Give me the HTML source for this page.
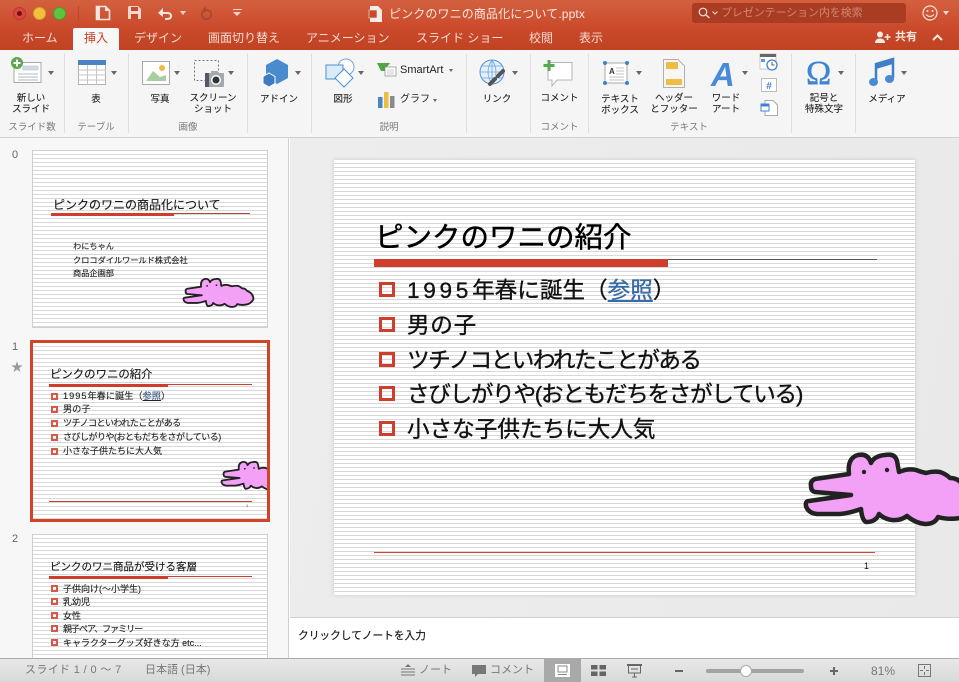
<!DOCTYPE html>
<html lang="ja"><head><meta charset="utf-8"><title>PowerPoint</title>
<style>
*{margin:0;padding:0;box-sizing:border-box}
html,body{width:959px;height:682px;overflow:hidden;background:#fff}
body{position:relative;font-family:"Liberation Sans","Noto Sans CJK JP",sans-serif;color:#222}
.t{position:absolute;white-space:nowrap;line-height:1}
.c{text-align:center;transform:translateX(-50%)}
.a{position:absolute}
.tab{color:#f6dcd3;font-size:12px;top:32px}
.lb{font-size:9.5px;color:#222;line-height:11px;position:absolute;text-align:center;white-space:nowrap;transform:translateX(-50%);-webkit-text-stroke:.1px #222}
.gl{font-size:9.5px;color:#7a7a7a;top:123px}
.dv{position:absolute;top:54px;width:1px;height:79px;background:#dfdfdf}
.ar{position:absolute;width:0;height:0;border-left:3px solid transparent;border-right:3px solid transparent;border-top:4px solid #666}
.sl{position:absolute;background:#fff repeating-linear-gradient(to bottom,#fff 0,#fff 3px,#d8d8d8 3px,#d8d8d8 4px);overflow:hidden}
.th{border:1px solid #cfcfcf}
.b{position:absolute;border:2px solid #d8574a}
.st{color:#777;font-size:11px;top:665px}
.bl{position:absolute;border:3px solid #cf3d2c;width:16px;height:15px;left:379px}
.bt{font-size:22.6px;color:#111;left:407px;-webkit-text-stroke:.35px #111}
.tt{color:#222;-webkit-text-stroke:.12px #222}
svg{position:absolute;overflow:visible}
</style></head><body>
<svg width="0" height="0" style="position:absolute"><defs>
<g id="croc"><path d="M811 486Q810 481 815 479L849 474Q847 458 858 455Q868 453 871 463Q874 456 885 455Q895 453 897 461L899 472Q908 468 916 470Q921 472 926 473Q933 471 940 472Q946 474 950 478Q958 478 962 484Q978 490 978 505Q972 516 960 518Q948 520 938 517Q935 524 925 524Q915 523 907 516Q900 521 892 520Q884 519 879 514Q876 522 866 522Q862 520 861 509Q850 513 840 514L817 514Q808 513 806 506Q805 501 809 501L851 495L815 492Q811 491 811 486Z" fill="#f2a1f7" stroke="#222" stroke-width="4.500" stroke-linejoin="round"/><circle cx="864" cy="472" r="2.200" fill="#222"/><circle cx="887" cy="470" r="2.200" fill="#222"/></g>
</defs></svg>

<!-- title bar -->
<div class="a" style="left:0;top:0;width:959px;height:50px;background:linear-gradient(#d4603f,#c9492a 60%,#c04323)"></div>
<div class="a" style="left:13px;top:7px;width:13px;height:13px;border-radius:50%;background:#e0443e;border:1px solid #b73a2e"></div>
<div class="a" style="left:17px;top:11px;width:5px;height:5px;border-radius:50%;background:#6d1310"></div>
<div class="a" style="left:33px;top:7px;width:13px;height:13px;border-radius:50%;background:#f3bf3c;border:1px solid #d49f2a"></div>
<div class="a" style="left:53px;top:7px;width:13px;height:13px;border-radius:50%;background:#5ec43f;border:1px solid #45a32c"></div>
<div class="a" style="left:78px;top:6px;width:1px;height:15px;background:#b8482d"></div>
<svg style="left:95px;top:5px" width="16" height="16"><path d="M1.500 1.500H10.500L14.500 5.500V14.500H1.500Z" fill="none" stroke="#f7e6e0" stroke-width="1.600"/><path d="M2 2H5V14H2Z M10 2L14 6H10Z" fill="#f7e6e0"/></svg>
<svg style="left:127px;top:5px" width="15" height="15"><path d="M2 1H11L14 4V14H1V2Z" fill="#f4d8cf"/><rect x="4" y="2" width="7" height="4" fill="#c9492a"/><rect x="4" y="9" width="7" height="5" fill="#c9492a"/></svg>
<svg style="left:157px;top:7px" width="16" height="13"><path d="M3 6H10Q14 6 14 9Q14 12 10 12H8" fill="none" stroke="#f7e6e0" stroke-width="2"/><path d="M1 6L6 1V10Z" fill="#f7e6e0"/></svg>
<div class="ar" style="left:180px;top:11px;border-top-color:#f0d4ca"></div>
<svg style="left:200px;top:6px" width="13" height="15"><path d="M4 4.500Q1 7 2 10Q4 14 8 13Q12 11 11 7Q10 4 6 4" fill="none" stroke="#a84a32" stroke-width="1.800"/><path d="M6 0V7L3 3.500Z" fill="#a84a32"/></svg>
<div class="a" style="left:233px;top:9px;width:9px;height:1px;background:#f3d5cb"></div>
<div class="ar" style="left:233px;top:12px;border-left-width:4.500px;border-right-width:4.500px;border-top-color:#f3d5cb"></div>
<svg style="left:369px;top:6px" width="13" height="16"><path d="M1 0H9L13 4V16H1Z" fill="#f5ece8"/><rect x="0" y="4" width="8" height="8" fill="#c9492a" stroke="#f5ece8" stroke-width=".6"/></svg>
<div class="t" style="left:389px;top:8px;font-size:12px;color:#f8e9e3;letter-spacing:.12px">ピンクのワニの商品化について.pptx</div>
<div class="a" style="left:692px;top:3px;width:214px;height:20px;border-radius:3px;background:#a93c22"></div>
<svg style="left:698px;top:7px" width="14" height="12"><circle cx="5" cy="5" r="3.800" fill="none" stroke="#f3e0d9" stroke-width="1.200"/><path d="M8 8L11.500 11" stroke="#f3e0d9" stroke-width="1.300"/></svg>
<svg style="left:712px;top:11px" width="6" height="4"><path d="M.5 .5L3 3L5.500 .5" fill="none" stroke="#f3e0d9"/></svg>
<div class="t" style="left:721px;top:8px;font-size:11px;color:#d08873;letter-spacing:-.1px">プレゼンテーション内を検索</div>
<svg style="left:922px;top:5px" width="16" height="16"><circle cx="8" cy="8" r="7" fill="none" stroke="#f3e0d9" stroke-width="1.200"/><circle cx="5.500" cy="6" r="1" fill="#f3e0d9"/><circle cx="10.500" cy="6" r="1" fill="#f3e0d9"/><path d="M4 9.500Q8 13.500 12 9.500" fill="none" stroke="#f3e0d9" stroke-width="1.200"/></svg>
<div class="ar" style="left:943px;top:11px;border-top-color:#f3e0d9"></div>

<!-- tabs -->
<div class="a" style="left:73px;top:28px;width:46px;height:22px;background:#f7f7f7;border-radius:2px 2px 0 0"></div>
<div class="t tab" style="left:22px">ホーム</div>
<div class="t tab" style="left:84px;color:#c5442a">挿入</div>
<div class="t tab" style="left:134px">デザイン</div>
<div class="t tab" style="left:208px">画面切り替え</div>
<div class="t tab" style="left:306px">アニメーション</div>
<div class="t tab" style="left:416px">スライド ショー</div>
<div class="t tab" style="left:529px">校閲</div>
<div class="t tab" style="left:579px">表示</div>
<svg style="left:874px;top:31px" width="17" height="13"><circle cx="6" cy="3.500" r="3" fill="#f8e9e3"/><path d="M1 12Q1 7.500 6 7.500Q11 7.500 11 12Z" fill="#f8e9e3"/><path d="M13.500 3V9M10.500 6H16.500" stroke="#f8e9e3" stroke-width="1.600"/></svg>
<div class="t" style="left:895px;top:32px;font-size:11px;color:#f8e9e3;font-weight:bold">共有</div>
<svg style="left:932px;top:34px" width="11" height="7"><path d="M1 6L5.500 1.500L10 6" fill="none" stroke="#f8e9e3" stroke-width="2"/></svg>

<!-- ribbon -->
<div class="a" style="left:0;top:50px;width:959px;height:88px;background:#f5f5f5;border-bottom:1px solid #cfcfcf"></div>
<div class="dv" style="left:64px"></div><div class="dv" style="left:128px"></div><div class="dv" style="left:247px"></div><div class="dv" style="left:311px"></div><div class="dv" style="left:466px"></div><div class="dv" style="left:530px"></div><div class="dv" style="left:588px"></div><div class="dv" style="left:791px"></div><div class="dv" style="left:855px"></div>

<svg style="left:10px;top:56px" width="34" height="30"><rect x="4" y="6.500" width="27" height="20" fill="#fff" stroke="#a9a9a9"/><rect x="13" y="10" width="15" height="4" fill="#cfdbe8" stroke="#b0bcc8" stroke-width=".5"/><path d="M8 18H28M8 21H28M8 24H28" stroke="#9aa4ae" stroke-width=".8"/><circle cx="7" cy="7" r="6" fill="#5aa84d"/><path d="M7 3.500V10.500M3.500 7H10.500" stroke="#fff" stroke-width="2"/></svg>
<div class="ar" style="left:48px;top:71px"></div>
<svg style="left:78px;top:60px" width="28" height="26"><rect x=".5" y=".5" width="27" height="24" fill="#fff" stroke="#b3b3b3"/><rect width="28" height="5" fill="#4b84c4"/><path d="M.5 10H27.500M.5 15H27.500M.5 20H27.500M9.500 5V25M18.500 5V25" stroke="#c4c4c4"/></svg>
<div class="ar" style="left:111px;top:71px"></div>
<svg style="left:142px;top:61px" width="28" height="24"><rect x=".5" y=".5" width="27" height="23" fill="#fff" stroke="#a9a9a9"/><circle cx="20" cy="7" r="3" fill="#efbb42"/><path d="M4 20L11 10L18 16L24 14V20Z" fill="#a8cf9d"/></svg>
<div class="ar" style="left:174px;top:71px"></div>
<svg style="left:194px;top:60px" width="32" height="28"><rect x=".5" y=".5" width="24" height="20" fill="none" stroke="#777" stroke-dasharray="2 2"/><rect x="11" y="13" width="19" height="14" rx="1" fill="#a5a9ae"/><rect x="11" y="13" width="4" height="14" fill="#4f5a66"/><rect x="17" y="11" width="7" height="3" fill="#a5a9ae"/><circle cx="22" cy="20" r="5" fill="#fff"/><circle cx="22" cy="20" r="3.500" fill="#333"/></svg>
<div class="ar" style="left:228px;top:71px"></div>
<svg style="left:262px;top:59px" width="28" height="29"><path d="M15 0L26 6V19L15 25L4 19V6Z" fill="#4a8bd0"/><path d="M7 14L13 17.500V24.500L7 28L1 24.500V17.500Z" fill="#3d7cc0" stroke="#fff"/></svg>
<div class="ar" style="left:295px;top:71px"></div>

<svg style="left:325px;top:58px" width="30" height="30"><circle cx="21" cy="9" r="8" fill="#fff" stroke="#6ea6dc"/><rect x="1" y="7" width="17" height="14" fill="#dcebf8" stroke="#4a8fd6"/><path d="M19 11L28 20L19 29L10 20Z" fill="#fff" stroke="#4a8fd6"/></svg>
<div class="ar" style="left:358px;top:71px"></div>
<svg style="left:377px;top:62px" width="19" height="15"><path d="M0 1H13L10 5L13 9H4Z" fill="#4fa648"/><rect x="8" y="5" width="11" height="9" fill="#fff" stroke="#888" stroke-width=".7"/><path d="M10 8H17M10 10H17M10 12H17" stroke="#999" stroke-width=".6"/></svg>
<div class="t" style="left:400px;top:65px;font-size:11px;color:#222;">SmartArt</div>
<div class="ar" style="left:449px;top:69px;border-left-width:2.500px;border-right-width:2.500px;border-top-width:3px"></div>
<svg style="left:378px;top:92px" width="17" height="16"><rect y="5" width="4.500" height="11" fill="#4a85c5"/><rect x="6" y="0" width="4.500" height="16" fill="#eebc40"/><rect x="12" y="4" width="4.500" height="12" fill="#8a8a8a"/></svg>
<div class="t" style="left:400px;top:95px;font-size:10px;color:#222">グラフ</div>
<div class="ar" style="left:433px;top:99px;border-left-width:2.500px;border-right-width:2.500px;border-top-width:3px"></div>
<svg style="left:479px;top:59px" width="30" height="30"><circle cx="13" cy="13" r="12" fill="#e4f0fb" stroke="#4f93dc"/><path d="M1 13H25M13 1V25M3 7H23M3 19H23M13 1Q5 13 13 25M13 1Q21 13 13 25" fill="none" stroke="#6ba6e2" stroke-width=".8"/><path d="M11 25L16 20M19 17L24 12" stroke="#555" stroke-width="4" stroke-linecap="round"/><path d="M14 22L21 15" stroke="#555" stroke-width="1.500"/></svg>
<div class="ar" style="left:512px;top:71px"></div>

<svg style="left:543px;top:60px" width="30" height="28"><path d="M5 2.500H29V20H14L9 26V20H5Z" fill="#fff" stroke="#b5b5b5"/><path d="M6 0V11M.5 5.500H11.500" stroke="#58a84d" stroke-width="3"/></svg>

<svg style="left:602px;top:60px" width="28" height="26"><rect x="3" y="3" width="22" height="20" fill="#fff" stroke="#a9a9a9"/><text x="7" y="14" font-size="8" font-weight="bold" fill="#333" font-family="Liberation Sans">A</text><path d="M14 8H22M14 11H22M14 14H22M7 17H22M7 20H22" stroke="#c4c4c4"/><g fill="#3f82d2"><circle cx="3" cy="3" r="2"/><circle cx="25" cy="3" r="2"/><circle cx="3" cy="23" r="2"/><circle cx="25" cy="23" r="2"/></g></svg>
<div class="ar" style="left:636px;top:71px"></div>
<svg style="left:663px;top:59px" width="22" height="29"><path d="M.5 .5H15L21.500 7V28.500H.500Z" fill="#f7f7f7" stroke="#b0b0b0"/><rect x="3" y="3" width="12" height="7" fill="#edbd45"/><rect x="3" y="20" width="16" height="6" fill="#edbd45"/></svg>
<svg style="left:711px;top:59px" width="24" height="28"><text x="0" y="27" font-size="33" font-style="italic" font-weight="bold" fill="#4a8bd8" font-family="Liberation Sans">A</text></svg>
<div class="ar" style="left:742px;top:71px"></div>
<svg style="left:760px;top:54px" width="18" height="17"><rect y="0" width="16" height="15" fill="#fff" stroke="#aaa" stroke-width=".6"/><rect width="16" height="3" fill="#666"/><rect x="1" y="5" width="4" height="3" fill="#5a9ce0"/><circle cx="12" cy="11" r="5" fill="#fff" stroke="#3f82d2" stroke-width="1.300"/><path d="M12 8V11H14.500" stroke="#333" fill="none" stroke-width=".8"/></svg>
<svg style="left:761px;top:78px" width="16" height="14"><rect x=".5" y=".5" width="15" height="13" fill="#fff" stroke="#bbb"/><text x="8" y="11" text-anchor="middle" font-size="10" font-weight="bold" fill="#3f82d2" font-family="Liberation Sans">#</text></svg>
<svg style="left:761px;top:100px" width="17" height="16"><path d="M4 .5H12L16.500 5V15.500H4Z" fill="#fff" stroke="#aaa"/><rect y="4" width="8" height="7" fill="#fff" stroke="#3f82d2"/><rect y="4" width="8" height="2.500" fill="#3f82d2"/></svg>
<div class="t" style="left:806px;top:57px;font-size:34px;color:#3f85d6;font-family:'Liberation Serif',serif;-webkit-text-stroke:.4px #3f85d6">Ω</div>
<div class="ar" style="left:838px;top:71px"></div>
<svg style="left:869px;top:58px" width="26" height="30"><path d="M7 23V6L24 1V20" fill="none" stroke="#3f7fc8" stroke-width="2.500"/><path d="M7 6L24 1V6L7 11Z" fill="#3f7fc8"/><ellipse cx="4.500" cy="24" rx="4.500" ry="4" fill="#4a8ad0"/><ellipse cx="20.500" cy="21" rx="4.500" ry="4" fill="#4a8ad0"/></svg>
<div class="ar" style="left:901px;top:71px"></div>

<div class="lb" style="left:31px;top:93px">新しい<br>スライド</div>
<div class="lb" style="left:96px;top:94px">表</div>
<div class="lb" style="left:160px;top:94px">写真</div>
<div class="lb" style="left:213px;top:93px">スクリーン<br>ショット</div>
<div class="lb" style="left:279px;top:94px">アドイン</div>
<div class="lb" style="left:343px;top:94px">図形</div>
<div class="lb" style="left:497px;top:94px">リンク</div>
<div class="lb" style="left:559.500px;top:93px">コメント</div>
<div class="lb" style="left:620px;top:94px">テキスト<br>ボックス</div>
<div class="lb" style="left:674px;top:93px">ヘッダー<br>とフッター</div>
<div class="lb" style="left:726px;top:93px">ワード<br>アート</div>
<div class="lb" style="left:824px;top:93px">記号と<br>特殊文字</div>
<div class="lb" style="left:887px;top:94px">メディア</div>
<div class="t c gl" style="left:32px">スライド数</div>
<div class="t c gl" style="left:96px">テーブル</div>
<div class="t c gl" style="left:188px">画像</div>
<div class="t c gl" style="left:389px">説明</div>
<div class="t c gl" style="left:559.500px">コメント</div>
<div class="t c gl" style="left:689px">テキスト</div>

<!-- left panel -->
<div class="a" style="left:0;top:138px;width:289px;height:520px;background:#f7f7f7;border-right:1px solid #d0d0d0;overflow:hidden">
</div>
<div class="t" style="left:12px;top:150px;font-size:11px;color:#666">0</div>
<div class="t" style="left:12px;top:342px;font-size:11px;color:#666">1</div>
<div class="t" style="left:11px;top:361px;font-size:12px;color:#999">★</div>
<div class="t" style="left:12px;top:534px;font-size:11px;color:#666">2</div>

<!-- thumb 0 -->
<div class="sl th" style="left:32px;top:150px;width:236px;height:178px"></div>
<div class="t tt" style="left:53px;top:199px;font-size:12px;color:#111">ピンクのワニの商品化について</div>
<div class="a" style="left:51px;top:213px;width:199px;height:1px;background:#b8453a"></div>
<div class="a" style="left:51px;top:213px;width:123px;height:3px;background:#cf3d2c"></div>
<div class="t tt" style="left:73px;top:243px;font-size:8.200px">わにちゃん</div>
<div class="t tt" style="left:73px;top:257px;font-size:8.200px">クロコダイルワールド株式会社</div>
<div class="t tt" style="left:73px;top:270px;font-size:8.200px">商品企画部</div>
<svg style="left:0;top:0" width="959" height="682"><use href="#croc" transform="translate(184 279) scale(.406) translate(-807 -455)"/></svg>

<!-- thumb 1 -->
<div class="sl" style="left:30px;top:340px;width:240px;height:182px;border:3px solid #d2442a"></div>
<div class="t tt" style="left:50px;top:370px;font-size:11.400px;color:#111">ピンクのワニの紹介</div>
<div class="a" style="left:49px;top:384px;width:203px;height:1px;background:#cf3d2c"></div>
<div class="a" style="left:49px;top:384px;width:119px;height:3px;background:#cf3d2c"></div>
<div class="b" style="left:51px;top:393px;width:7px;height:7px"></div><div class="t tt" style="left:63px;top:392px;font-size:9.200px"><span style="letter-spacing:1px">1995</span>年春に誕生（<span style="color:#3f6fa8;text-decoration:underline">参照</span>）</div>
<div class="b" style="left:51px;top:406px;width:7px;height:7px"></div><div class="t tt" style="left:63px;top:405px;font-size:9.200px">男の子</div>
<div class="b" style="left:51px;top:420px;width:7px;height:7px"></div><div class="t tt" style="left:63px;top:419px;font-size:9px;letter-spacing:-.55px">ツチノコといわれたことがある</div>
<div class="b" style="left:51px;top:434px;width:7px;height:7px"></div><div class="t tt" style="left:63px;top:433px;font-size:9px;letter-spacing:-.5px">さびしがりや(おともだちをさがしている)</div>
<div class="b" style="left:51px;top:448px;width:7px;height:7px"></div><div class="t tt" style="left:63px;top:447px;font-size:9px">小さな子供たちに大人気</div>
<div class="a" style="left:49px;top:501px;width:203px;height:1px;background:#cf3d2c"></div>
<div class="t" style="left:246px;top:504px;font-size:4px;color:#444">1</div>
<svg style="left:33px;top:343px;clip-path:inset(0)" width="234" height="176"><use href="#croc" transform="translate(189 119) scale(.4) translate(-807 -455)"/></svg>

<!-- thumb 2 -->
<div class="a" style="left:0;top:530px;width:289px;height:128px;overflow:hidden">
<div class="sl th" style="left:32px;top:4px;width:236px;height:178px"></div>
<div class="t tt" style="left:50px;top:32px;font-size:10.500px;color:#111">ピンクのワニ商品が受ける客層</div>
<div class="a" style="left:49px;top:46px;width:203px;height:1px;background:#cf3d2c"></div>
<div class="a" style="left:49px;top:46px;width:119px;height:3px;background:#cf3d2c"></div>
<div class="b" style="left:51px;top:55px;width:7px;height:7px"></div><div class="t tt" style="left:63px;top:55px;font-size:9px">子供向け(〜小学生)</div>
<div class="b" style="left:51px;top:68px;width:7px;height:7px"></div><div class="t tt" style="left:63px;top:68px;font-size:9px">乳幼児</div>
<div class="b" style="left:51px;top:82px;width:7px;height:7px"></div><div class="t tt" style="left:63px;top:82px;font-size:9px">女性</div>
<div class="b" style="left:51px;top:95px;width:7px;height:7px"></div><div class="t tt" style="left:63px;top:95px;font-size:9px;letter-spacing:-1px">親子ペア、ファミリー</div>
<div class="b" style="left:51px;top:109px;width:7px;height:7px"></div><div class="t tt" style="left:63px;top:109px;font-size:9px">キャラクターグッズ好きな方 etc...</div>
</div>

<!-- main -->
<div class="a" style="left:290px;top:138px;width:669px;height:480px;background:linear-gradient(100deg,#ededed,#e9e9e9)"></div>
<div class="sl" style="left:334px;top:160px;width:581px;height:435px;box-shadow:0 0 4px rgba(0,0,0,.15)"></div>
<div class="t" style="left:375px;top:224px;font-size:28.500px;color:#000;-webkit-text-stroke:.45px #000">ピンクのワニの紹介</div>
<div class="a" style="left:374px;top:259px;width:503px;height:1px;background:#555"></div>
<div class="a" style="left:374px;top:259px;width:294px;height:8px;background:#cf3d2c"></div>
<div class="bl" style="top:282px"></div><div class="t bt" style="top:280px"><span style="letter-spacing:3.700px">1995</span>年春に誕生（<span style="color:#376ba5;text-decoration:underline;-webkit-text-stroke:.35px #376ba5">参照</span>）</div>
<div class="bl" style="top:317px"></div><div class="t bt" style="top:315px;letter-spacing:.7px">男の子</div>
<div class="bl" style="top:352px"></div><div class="t bt" style="top:350px;letter-spacing:-1.500px">ツチノコといわれたことがある</div>
<div class="bl" style="top:386px"></div><div class="t bt" style="top:384px;letter-spacing:-1.300px">さびしがりや(おともだちをさがしている)</div>
<div class="bl" style="top:421px"></div><div class="t bt" style="top:419px">小さな子供たちに大人気</div>
<div class="a" style="left:374px;top:552px;width:501px;height:1px;background:#d2442a"></div>
<div class="t" style="left:864px;top:562px;font-size:9px;color:#111">1</div>
<svg style="left:0;top:0" width="959" height="682"><use href="#croc"/></svg>

<!-- notes -->
<div class="a" style="left:290px;top:617px;width:669px;height:41px;background:#fff;border-top:1px solid #cfcfcf"></div>
<div class="t" style="left:298px;top:631px;font-size:10.700px;color:#111;-webkit-text-stroke:.15px #111">クリックしてノートを入力</div>

<!-- status -->
<div class="a" style="left:0;top:658px;width:959px;height:24px;background:linear-gradient(#e8e8e8,#d9d9d9);border-top:1px solid #ababab"></div>
<div class="t st" style="left:25px;letter-spacing:.35px">スライド 1 / 0 〜 7</div>
<div class="t st" style="left:145px">日本語 (日本)</div>
<svg style="left:401px;top:664px" width="14" height="13"><path d="M7 0L10 3H4Z" fill="#777"/><path d="M0 5H14M0 8H14M0 11H14" stroke="#777"/></svg>
<div class="t st" style="left:419px">ノート</div>
<svg style="left:472px;top:665px" width="14" height="13"><path d="M0 0H14V9H6L3 12V9H0Z" fill="#777"/></svg>
<div class="t st" style="left:490px">コメント</div>
<div class="a" style="left:544px;top:659px;width:37px;height:23px;background:#a9a9a9"></div>
<svg style="left:555px;top:664px" width="15" height="13"><rect width="15" height="13" fill="#fff"/><rect x="3" y="2" width="9" height="6" fill="none" stroke="#8a8a8a"/><path d="M3 10.500H12" stroke="#8a8a8a"/></svg>
<svg style="left:591px;top:665px" width="15" height="11"><rect width="6.500" height="4.500" fill="#666"/><rect x="8.500" width="6.500" height="4.500" fill="#666"/><rect y="6.500" width="6.500" height="4.500" fill="#666"/><rect x="8.500" y="6.500" width="6.500" height="4.500" fill="#666"/></svg>
<svg style="left:627px;top:664px" width="15" height="14"><path d="M0 1H15" stroke="#666" stroke-width="2"/><path d="M1.500 1V9H13.500V1M7.500 9V13M5 13H10M4 5H11" fill="none" stroke="#666"/></svg>
<div class="a" style="left:675px;top:670px;width:8px;height:2px;background:#666"></div>
<div class="a" style="left:706px;top:669px;width:98px;height:4px;border-radius:2px;background:#a3a3a3"></div>
<div class="a" style="left:740px;top:665px;width:12px;height:12px;border-radius:50%;background:#fff;border:1px solid #aaa"></div>
<div class="a" style="left:830px;top:670px;width:8px;height:2px;background:#666"></div>
<div class="a" style="left:833px;top:667px;width:2px;height:8px;background:#666"></div>
<div class="t st" style="left:871px;top:665px;font-size:12px">81%</div>
<svg style="left:918px;top:664px" width="13" height="13"><rect x=".5" y=".5" width="12" height="12" fill="none" stroke="#777"/><path d="M6.500 2V5M6.500 8V11M2 6.500H5M8 6.500H11" stroke="#777"/></svg>
</body></html>
